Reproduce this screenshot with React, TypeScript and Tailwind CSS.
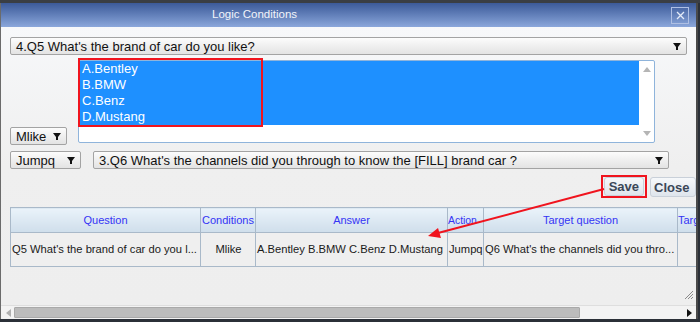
import { ReactNode } from 'react'

const Arrow = () => (
  <svg width="8" height="7" viewBox="0 0 8 7" className="shrink-0">
    <polygon points="0,0 8,0 5,4 5,7 3,7 3,4" fill="#111" />
  </svg>
)

interface ISelect {
  text: string
  className: string
}

const Select = ({ text, className }: ISelect) => (
  <div
    className={`flex h-[18px] shrink-0 items-center justify-between rounded-[2px] border border-[#a3a3a3] bg-linear-to-b from-[#fcfcfc] to-[#e3e3e3] pl-[5px] pr-[5px] text-[13px] leading-none text-[#111] ${className}`}
  >
    <span className="whitespace-nowrap">{text}</span>
    <Arrow />
  </div>
)

const Th = ({ children, w, left }: { children: ReactNode; w: string; left?: boolean }) => (
  <th
    className={`h-[25px] overflow-hidden whitespace-nowrap border border-[#a9b9c9] bg-linear-to-b from-[#eaf3fa] to-[#cfdeeb] p-0 text-[11px] font-normal text-[#3434f5] ${w} ${
      left ? 'text-left' : 'text-center'
    }`}
  >
    {children}
  </th>
)

const Td = ({ children, center }: { children: ReactNode; center?: boolean }) => (
  <td
    className={`h-[34px] overflow-hidden whitespace-nowrap border border-[#a9b9c9] p-0 pl-[1px] text-[11.2px] text-[#1a1a1a] ${
      center ? 'text-center' : 'text-left'
    }`}
  >
    {children}
  </td>
)

const options = ['A.Bentley', 'B.BMW', 'C.Benz', 'D.Mustang']

const App = () => {
  return (
    <div className="relative h-[322px] w-[700px] overflow-hidden bg-[#2b3038] font-['Liberation_Sans',Arial,sans-serif]">
      <div className="h-[3px] bg-[#3a3e44]" />
      <div className="flex h-[316px] w-[698px] flex-col overflow-hidden border-l border-r-2 border-[#6b6b6b] border-r-[#4a4a4a]">
        {/* title bar */}
        <div className="flex h-[24px] shrink-0 items-center bg-linear-to-b from-[#3c5a99] to-[#8ba7db] pl-[211px] pr-[7px]">
          <span className="flex-1 text-[11.5px] text-[#f2f4fa]">Logic Conditions</span>
          <div className="flex h-[17px] w-[18px] items-center justify-center border border-[#aebfe3]">
            <svg width="9" height="9" viewBox="0 0 9 9">
              <path d="M1 1 L8 8 M8 1 L1 8" stroke="#e4ebf8" strokeWidth="1.3" />
            </svg>
          </div>
        </div>

        {/* body */}
        <div className="flex flex-1 flex-col bg-linear-to-b from-[#f7f8fa] via-[#efefef] to-[#eeeeee] pl-[9px]">
          <Select text="4.Q5 What's the brand of car do you like?" className="mt-[10px] w-[677px]" />

          <div className="mt-[5px] flex items-start">
            <Select text="Mlike" className="mt-[67px] w-[57px]" />
            <div className="ml-[11px] flex h-[83px] w-[577px] rounded-[2px] border border-[#8fb4db] bg-white">
              <div className="flex-1">
                <div className="bg-[#1e90ff]">
                  {options.map((o) => (
                    <div key={o} className="h-[16px] pl-[3px] text-[13px] leading-[16px] text-white">
                      {o}
                    </div>
                  ))}
                </div>
              </div>
              <div className="flex w-[15px] flex-col items-center justify-between py-[6px]">
                <svg width="8" height="5" viewBox="0 0 8 5">
                  <polygon points="4,0 8,5 0,5" fill="#b5b5b5" />
                </svg>
                <svg width="8" height="5" viewBox="0 0 8 5">
                  <polygon points="0,0 8,0 4,5" fill="#b5b5b5" />
                </svg>
              </div>
            </div>
          </div>

          <div className="mt-[6px] flex items-center">
            <Select text="Jumpq" className="w-[71px]" />
            <Select
              text="3.Q6 What's the channels did you through to know the [FILL] brand car ?"
              className="ml-[12px] w-[576px]"
            />
          </div>

          <div className="mt-[6px] flex h-[23px] justify-end gap-[3px] pr-0">
            <div className="flex items-center border-2 border-[#f0141e] px-[1px]">
              <button className="h-[19px] rounded-[3px] border border-[#c9d0d9] bg-linear-to-b from-[#f6f8fa] to-[#dfe5ec] px-[4px] text-[13px] font-bold leading-none text-[#3b4758]">
                Save
              </button>
            </div>
            <button className="mt-[2px] h-[20px] w-[46px] rounded-[3px] border border-[#c9d0d9] bg-linear-to-b from-[#f6f8fa] to-[#dfe5ec] pl-[3px] text-left text-[13px] font-bold leading-none text-[#3b4758]">
              Close
            </button>
          </div>

          <div className="mt-[9px] w-[720px]">
            <table className="w-[716px] table-fixed border-collapse bg-[#efefef]">
              <thead>
                <tr>
                  <Th w="w-[190px]">Question</Th>
                  <Th w="w-[55px]">Conditions</Th>
                  <Th w="w-[192px]">Answer</Th>
                  <Th w="w-[36px]" left>
                    <span className="text-[10.4px]">Action</span>
                  </Th>
                  <Th w="w-[194px]">Target question</Th>
                  <Th w="w-[49px]" left>
                    Target
                  </Th>
                </tr>
              </thead>
              <tbody>
                <tr>
                  <Td>Q5 What's the brand of car do you l...</Td>
                  <Td center>Mlike</Td>
                  <Td>A.Bentley B.BMW C.Benz D.Mustang</Td>
                  <Td>Jumpq</Td>
                  <Td>Q6 What's the channels did you thro...</Td>
                  <Td>{''}</Td>
                </tr>
              </tbody>
            </table>
          </div>

          <div className="flex flex-1 items-end justify-end pb-[6px] pr-[3px]">
            <svg width="8" height="8" viewBox="0 0 8 8">
              <path d="M8 0 L0 8 M8 3 L3 8 M8 6 L6 8" stroke="#8a8a8a" strokeWidth="1" />
            </svg>
          </div>
        </div>

        {/* horizontal scrollbar */}
        <div className="flex h-[14px] shrink-0 items-center border-t border-[#dedede] bg-[#f3f3f3] pl-[5px] pr-[4px]">
          <svg width="5" height="8" viewBox="0 0 5 8">
            <polygon points="5,0 5,8 0,4" fill="#b0b0b0" />
          </svg>
          <div className="ml-[3px] h-[11px] w-[566px] rounded-[1px] border border-[#a9a9a9] bg-[#bcbcbc]" />
          <div className="flex-1" />
          <svg width="5" height="8" viewBox="0 0 5 8">
            <polygon points="0,0 0,8 5,4" fill="#111" />
          </svg>
        </div>
      </div>

      {/* annotations */}
      <div className="absolute left-[78px] top-[58px] h-[69px] w-[185px] border-2 border-[#f0141e]" />
      <svg className="pointer-events-none absolute left-0 top-0" width="700" height="322">
        <line x1="604" y1="189" x2="438" y2="233" stroke="#f0141e" strokeWidth="2" />
        <polygon points="428,236 441,238 438,228" fill="#f0141e" />
      </svg>
    </div>
  )
}

export default App
